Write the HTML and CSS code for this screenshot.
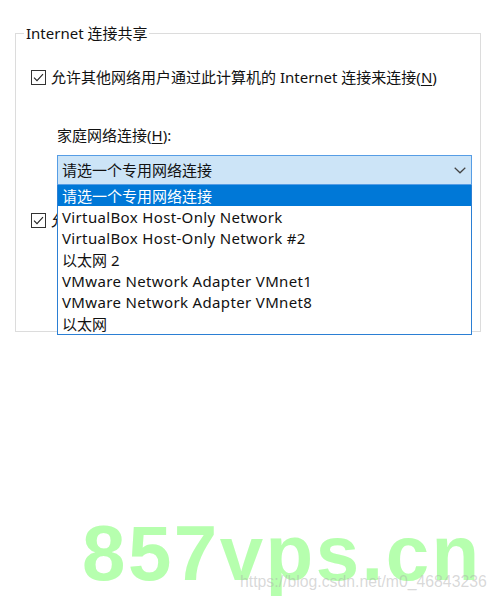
FILE: index.html
```html
<!DOCTYPE html>
<html lang="zh-CN">
<head>
<meta charset="utf-8">
<title>Internet 连接共享</title>
<link rel="stylesheet" href="styles.css">
</head>
<body>
<div class="page">
  <fieldset class="group">
    <legend class="legend">Internet 连接共享</legend>
    <div class="check-row first">
      <span class="checkbox"><svg width="15" height="15" viewBox="0 0 15 15"><rect x="0.5" y="0.5" width="14" height="14" fill="#fff" stroke="#333"/><path d="M3 7.6 L6 10.6 L12 4.2" fill="none" stroke="#222" stroke-width="1.1"/></svg></span>
      <span class="check-text">允许其他网络用户通过此计算机的 Internet 连接来连接(<u>N</u>)</span>
    </div>
    <div class="indent">
      <div class="label">家庭网络连接(<u>H</u>):</div>
      <div class="combo-wrap">
        <div class="combo">
          <span class="combo-text">请选一个专用网络连接</span>
          <svg class="chev" width="12" height="7" viewBox="0 0 12 7"><path d="M0.7 0.7 L6 5.8 L11.3 0.7" fill="none" stroke="#444" stroke-width="1.2"/></svg>
        </div>
        <div class="list">
          <div class="item sel">请选一个专用网络连接</div>
          <div class="item latin">VirtualBox Host-Only Network</div>
          <div class="item latin">VirtualBox Host-Only Network #2</div>
          <div class="item">以太网 2</div>
          <div class="item latin">VMware Network Adapter VMnet1</div>
          <div class="item latin">VMware Network Adapter VMnet8</div>
          <div class="item">以太网</div>
        </div>
      </div>
    </div>
    <div class="check-row second">
      <span class="checkbox"><svg width="15" height="15" viewBox="0 0 15 15"><rect x="0.5" y="0.5" width="14" height="14" fill="#fff" stroke="#333"/><path d="M3 7.6 L6 10.6 L12 4.2" fill="none" stroke="#222" stroke-width="1.1"/></svg></span>
      <span class="check-text">允许其他网络用户控制或禁用共享的 Internet 连接(<u>O</u>)</span>
    </div>
  </fieldset>
</div>
<div class="wm-big">857vps.cn</div>
<div class="wm-url">https://blog.csdn.net/m0_46843236</div>
</body>
</html>
```
FILE: styles.css
```css
html, body {
  margin: 0;
  padding: 0;
  background: #fff;
}
body {
  width: 496px;
  height: 600px;
  position: relative;
  overflow: hidden;
  font-family: "Noto Sans", "Noto Sans CJK SC", sans-serif;
  font-size: 15px;
  color: #111;
}
.page {
  padding: 23px 15px 0 15px;
}
.group {
  margin: 0;
  border: 1px solid #dcdcdc;
  padding: 0 8px 101px 15px;
  min-width: 0;
}
.legend {
  margin-left: -7px;
  padding: 0 2px;
  line-height: 20px;
}
.check-row {
  display: flex;
  align-items: center;
  height: 20px;
  line-height: 20px;
  white-space: nowrap;
}
.check-row.first {
  margin-top: 24px;
}
.check-row.second {
  margin-top: 25px;
}
.checkbox {
  display: flex;
  width: 15px;
  height: 15px;
  margin-right: 5px;
  flex: none;
}
.check-text u, .label u {
  text-decoration-thickness: 1px;
  text-underline-offset: 2px;
}
.indent {
  margin-left: 26px;
}
.label {
  margin-top: 38px;
  line-height: 20px;
}
.combo-wrap {
  position: relative;
  margin-top: 10px;
}
.combo {
  box-sizing: border-box;
  height: 30px;
  border: 1px solid #569de5;
  background: #cce4f7;
  display: flex;
  align-items: center;
  justify-content: space-between;
  padding: 0 5px 0 4px;
}
.combo-text {
  line-height: 20px;
}
.chev {
  display: block;
}
.list {
  position: absolute;
  left: 0;
  right: 0;
  top: 30px;
  height: 149px;
  border: 1px solid #2b7fd4;
  border-top: none;
  background: #fff;
  display: grid;
  grid-template-rows: repeat(7, 1fr);
  z-index: 2;
}
.item {
  display: flex;
  align-items: center;
  padding-left: 4px;
  white-space: nowrap;
}
.item.latin {
  letter-spacing: 0.35px;
}
.item.sel {
  background: #0078d7;
  color: #fff;
}
.wm-big {
  position: absolute;
  left: 82px;
  top: 514px;
  font-family: "Liberation Sans", Arial, sans-serif;
  font-weight: bold;
  font-size: 78px;
  line-height: 1;
  letter-spacing: 2.5px;
  color: #b6ffae;
  white-space: nowrap;
  z-index: 3;
}
.wm-url {
  position: absolute;
  left: 240px;
  top: 574px;
  font-family: "Liberation Sans", Arial, sans-serif;
  font-size: 15.8px;
  line-height: 16px;
  color: rgba(170, 170, 170, 0.45);
  white-space: nowrap;
  z-index: 4;
}
```
